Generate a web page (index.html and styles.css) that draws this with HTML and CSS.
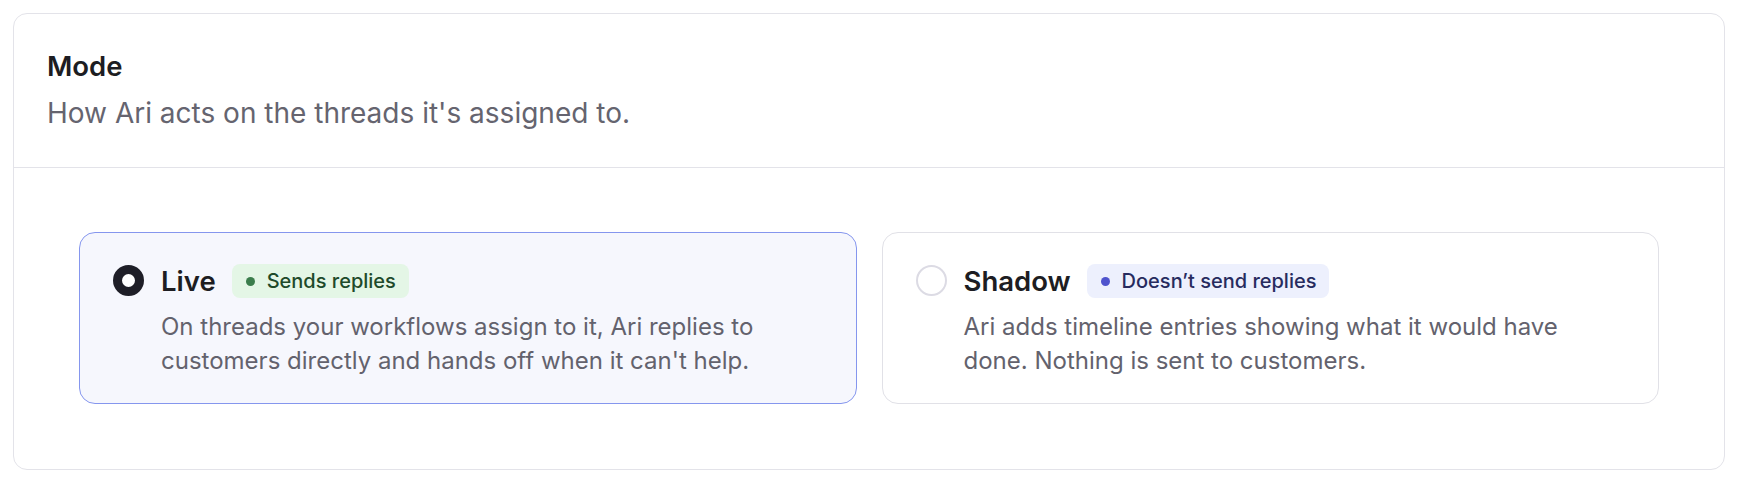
FILE: index.html
```html
<!DOCTYPE html>
<html lang="en">
<head>
<meta charset="utf-8">
<title>Mode</title>
<link rel="stylesheet" href="styles.css">
</head>
<body>
<section class="panel">
  <header class="panel-head">
    <h2 class="panel-title">Mode</h2>
    <p class="panel-sub">How Ari acts on the threads it's assigned to.</p>
  </header>
  <div class="panel-body">
    <div class="options">
      <label class="option option--selected">
        <span class="radio radio--on"></span>
        <span class="option-main">
          <span class="option-row">
            <span class="option-name">Live</span>
            <span class="badge badge--green"><span class="badge-dot"></span>Sends replies</span>
          </span>
          <span class="option-desc">On threads your workflows assign to it, Ari replies to customers directly and hands off when it can't help.</span>
        </span>
      </label>
      <label class="option">
        <span class="radio"></span>
        <span class="option-main">
          <span class="option-row">
            <span class="option-name">Shadow</span>
            <span class="badge badge--blue"><span class="badge-dot"></span>Doesn’t send replies</span>
          </span>
          <span class="option-desc">Ari adds timeline entries showing what it would have done. Nothing is sent to customers.</span>
        </span>
      </label>
    </div>
  </div>
</section>
</body>
</html>
```
FILE: styles.css
```css
* { box-sizing: border-box; }
html, body { margin: 0; background: #ffffff; }
body {
  padding: 13px 13px;
  font-family: Inter, "Noto Sans", sans-serif;
  color: #1e1e24;
}
.panel {
  border: 1.5px solid #e3e3e9;
  border-radius: 14px;
  background: #fff;
}
.panel-head {
  padding: 36px 32px 38px 33px;
  border-bottom: 1.5px solid #e3e3e9;
}
.panel-title {
  margin: 0;
  font-size: 27.5px;
  line-height: 32px;
  font-weight: 600;
  color: #1d1d22;
}
.panel-sub {
  margin: 15px 0 0;
  font-size: 28px;
  line-height: 32px;
  color: #65646f;
}
.panel-body {
  padding: 64px 65px 65px;
}
.options {
  display: grid;
  grid-template-columns: 1fr 1fr;
  gap: 25px;
}
.option {
  display: flex;
  align-items: flex-start;
  gap: 17px;
  padding: 31px 32px 25px 33px;
  border: 1.5px solid #e1e1e7;
  border-radius: 16px;
  background: #fff;
}
.option--selected {
  border-color: #8596ee;
  background: #f6f7fd;
}
.radio {
  flex: none;
  width: 31px;
  height: 31px;
  margin-top: 1px;
  border-radius: 50%;
  border: 2px solid #dcdbe4;
  background: #fff;
}
.radio--on {
  border: 9.5px solid #1e1e27;
  background: #fff;
}
.option-main {
  display: flex;
  flex-direction: column;
  gap: 12px;
}
.option-row {
  display: flex;
  align-items: center;
  gap: 16px;
  height: 34px;
}
.option-name {
  font-size: 27.5px;
  font-weight: 600;
  color: #1d1d22;
}
.badge {
  display: inline-flex;
  align-items: center;
  gap: 12px;
  height: 34px;
  padding: 0 13px 0 14px;
  border-radius: 8px;
  font-size: 20px;
  font-weight: 500;
}
.badge-dot {
  width: 9px;
  height: 9px;
  border-radius: 50%;
}
.badge--green { background: #e4f6e6; color: #1e4a2a; }
.badge--green .badge-dot { background: #3b7d4c; }
.badge--blue { background: #edf0fd; color: #272b5f; }
.badge--blue .badge-dot { background: #4f53cd; }
.option-desc {
  max-width: 620px;
  font-size: 24px;
  line-height: 34px;
  color: #63626d;
}
```
